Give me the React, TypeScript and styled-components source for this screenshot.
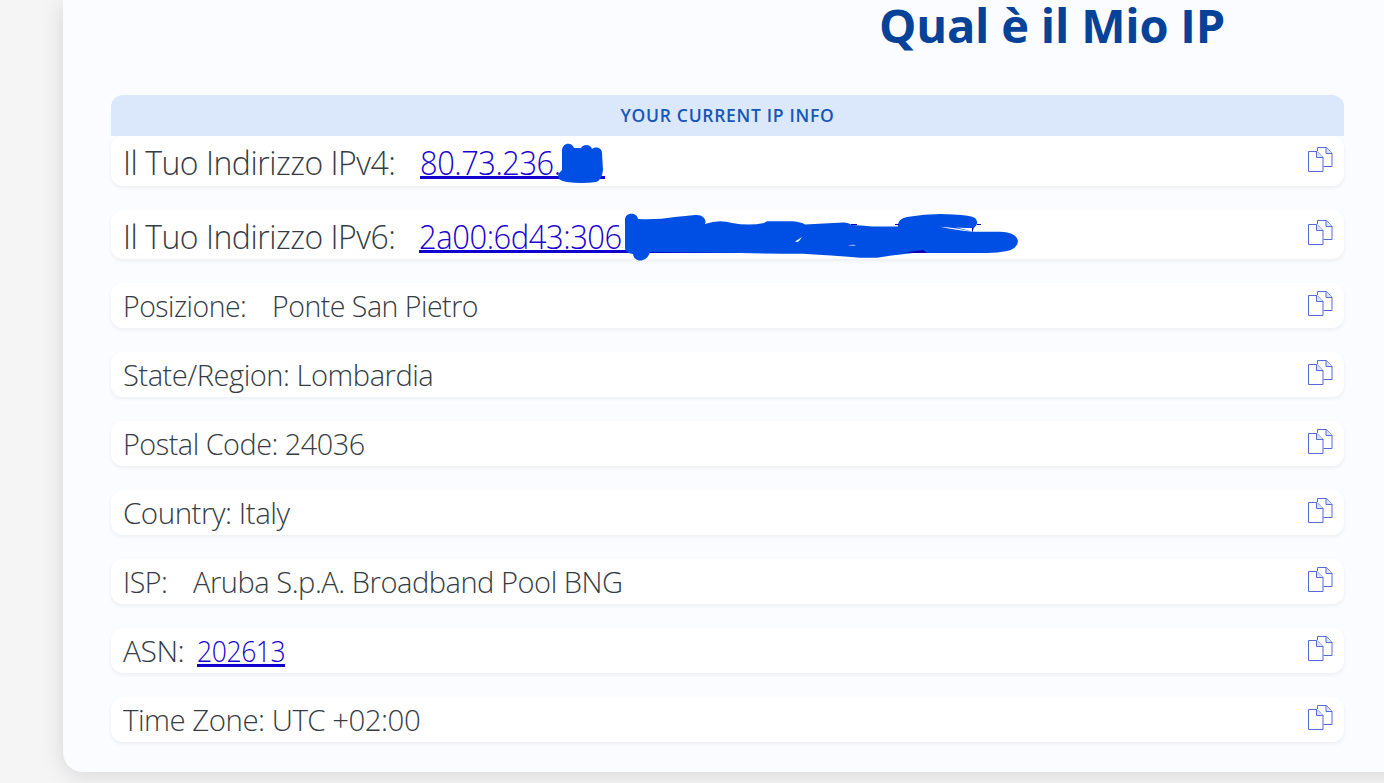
import { ReactNode } from "react";
import styled, { createGlobalStyle } from "styled-components";

const GlobalStyle = createGlobalStyle`
  html, body {
    margin: 0;
    padding: 0;
    overflow: hidden;
    background: #f5f5f5;
  }
  * {
    box-sizing: border-box;
  }
`;

const Page = styled.main`
  height: 783px;
  padding-left: 62.5px;
  overflow: hidden;
  font-family: "Open Sans", "Noto Sans", sans-serif;
`;

// wider than the viewport, the right part is cut off
const Card = styled.section`
  width: 1979px;
  height: 772px;
  padding: 0 48.5px;
  border-radius: 0 0 20px 20px;
  background: #fbfcff;
  box-shadow: 0 3px 24px rgba(0, 0, 0, 0.13);
`;

const Title = styled.h1`
  height: 95px;
  margin: 0;
  font-size: 47px;
  font-weight: 700;
  line-height: 50px;
  letter-spacing: -0.2px;
  text-align: center;
  color: #064298;
`;

const InfoList = styled.div`
  width: 1233px;
`;

const InfoHeader = styled.div`
  height: 41px;
  border-radius: 12px 12px 0 0;
  background: #dbe8fb;
  color: #1656b8;
  font-size: 17.500px;
  font-weight: 600;
  line-height: 40px;
  letter-spacing: 0.7px;
  text-align: center;
`;

const Row = styled.div<{ $height: number }>`
  position: relative;
  display: flex;
  align-items: center;
  height: ${({ $height }) => $height}px;
  margin-bottom: 24px;
  padding: 0 11px 0 12px;
  border-radius: 12px;
  background: #fff;
  box-shadow: 0 2px 4px rgba(0, 0, 0, 0.06);
  color: #353c44;
  font-size: ${({ $height }) => ($height > 45 ? "33.5px" : "30px")};
  font-weight: 300;
  line-height: ${({ $height }) => ($height > 45 ? "52px" : "45px")};
  white-space: nowrap;
`;

const Value = styled.span<{ $scale: number }>`
  display: inline-block;
  letter-spacing: -0.5px;
  transform: scaleX(${({ $scale }) => $scale});
  transform-origin: 0 50%;
`;

const Label = styled(Value)<{ $width: number }>`
  flex: none;
  align-self: flex-start;
  width: ${({ $width }) => $width}px;
`;

const ValueLink = styled.a<{ $width: number; $line: number }>`
  flex: none;
  align-self: flex-start;
  width: ${({ $width }) => $width}px;
  height: ${({ $line }) => $line}px;
  border-bottom: 3px solid #0f00d0;
  color: #1a00d4;
  text-decoration: none;
`;

const CopyButton = styled.button`
  margin: 0 0 4px auto;
  padding: 0;
  border: 0;
  height: 25px;
  background: none;
  cursor: pointer;
`;

const Scribble = styled.svg`
  position: absolute;
  left: 0;
  top: 0;
  overflow: visible;
  pointer-events: none;
`;

const CopyIcon = () => (
  <svg width="25" height="25" viewBox="0 0 25 25" fill="none" stroke="#566ad6" strokeWidth="1">
    <path d="M9.5 4V.5H18.500l5.500 6V19.500H15.500" />
    <path d="M18 .5V6.500H24" fill="#dde3fc" />
    <path d="M.5 4.500H9l6 6V24.500H.5Z" fill="#fff" />
    <path d="M8.500 4.500V10.500H15" fill="#dde3fc" />
  </svg>
);

const InfoRow = ({ height = 45, children }: { height?: number; children: ReactNode }) => (
  <Row $height={height}>
    {children}
    <CopyButton type="button" aria-label="Copy">
      <CopyIcon />
    </CopyButton>
  </Row>
);

const App = () => {
  return (
    <Page>
      <GlobalStyle />
      <Card>
        <Title>Qual è il Mio IP</Title>
        <InfoList>
          <InfoHeader>YOUR CURRENT IP INFO</InfoHeader>
          <InfoRow height={50}>
            <Label $width={297} $scale={0.954}>Il Tuo Indirizzo IPv4:</Label>
            <ValueLink href="#" $width={185} $line={43}>
              <Value $scale={0.92}>80.73.236.</Value>
            </ValueLink>
            <Scribble width="1233" height="50">
              <path
                fill="#004fe5"
                d="M451 14C452 6 461 6 463 12Q468 12 470 12C473 7 480 9 481 13C485 10 491 12 491 17L492 34Q491 44 485 46Q470 48 456 46C450 45 445 43 448 37L451 34Z"
              />
            </Scribble>
          </InfoRow>
          <InfoRow height={49}>
            <Label $width={296} $scale={0.954}>Il Tuo Indirizzo IPv6:</Label>
            <ValueLink href="#" $width={507} $line={43}>
              <Value $scale={0.925}>2a00:6d43:306</Value>
            </ValueLink>
            <Scribble width="1233" height="50">
              <path
                fill="#004fe5"
                d="M514 10C514 2 526 2 527 9Q546 10 564 7L584 5C592 4 596 10 594 14Q608 9 621 13Q638 16 653 13L656 11.200H682Q690 12 694 14.400L732 12.500Q737 12 741 15Q750 15 761 16.500H787Q786 9 796 7Q820 3 842 4.500Q860 5 864 8Q869 13 863 18L861 21.800H889Q905 22 907 31Q906 39 896 41Q887 43 876 43H802Q782 45 766 47.800H749Q715 45 692 43.800Q660 43.800 629 43L539 42C536 53 523 53 522 44Q514 43 514 38Z"
              />
              <path fill="#fff" d="M684 31.500L688 29L691 27Q688 32 686 32ZM737 35.500Q743 34 745 35.500ZM829 16.800Q847 18 861 21.800Q843 20 829 16.800Z" />
              <path fill="#fff" d="M845 17.500Q856 18 861 18V21.800Q853 19 845 17.500Z" />
              <path d="M740 14.500H746M784 14.500H788M866 14.500H870M861.500 17.500V21.500" stroke="#0f00c0" />
              <path fill="#1000b4" d="M795 43L800 41.500L812 40L816 43Z" />
            </Scribble>
          </InfoRow>
          <InfoRow>
            <Label $width={148.5} $scale={0.946}>Posizione:</Label>
            <Value $scale={0.949}>Ponte San Pietro</Value>
          </InfoRow>
          <InfoRow>
            <Value $scale={0.97}>State/Region: Lombardia</Value>
          </InfoRow>
          <InfoRow>
            <Value $scale={0.96}>Postal Code: 24036</Value>
          </InfoRow>
          <InfoRow>
            <Value $scale={0.985}>Country: Italy</Value>
          </InfoRow>
          <InfoRow>
            <Label $width={70} $scale={0.95}>ISP:</Label>
            <Value $scale={0.969}>Aruba S.p.A. Broadband Pool BNG</Value>
          </InfoRow>
          <InfoRow>
            <Label $width={74} $scale={1}>ASN:</Label>
            <ValueLink href="#" $width={88} $line={39}>
              <Value $scale={0.885}>202613</Value>
            </ValueLink>
          </InfoRow>
          <InfoRow>
            <Value $scale={0.98}>Time Zone: UTC +02:00</Value>
          </InfoRow>
        </InfoList>
      </Card>
    </Page>
  );
};

export default App;
